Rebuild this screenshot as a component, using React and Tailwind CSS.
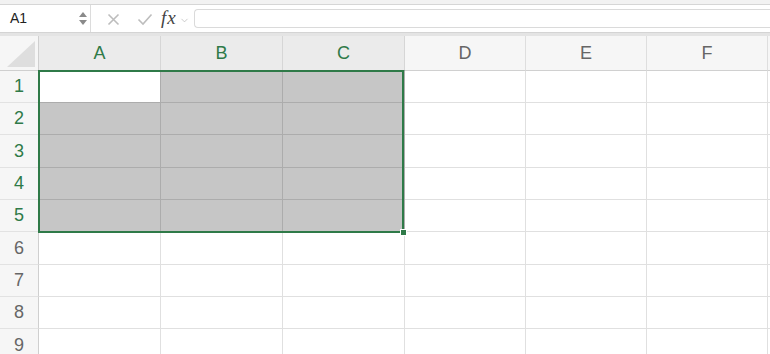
import { ChevronDown } from "lucide-react"

const cols = [
    { name: "A", w: "w-[122px]", sel: true },
    { name: "B", w: "w-[122px]", sel: true },
    { name: "C", w: "w-[122px]", sel: true },
    { name: "D", w: "w-[121px]", sel: false },
    { name: "E", w: "w-[121px]", sel: false },
    { name: "F", w: "w-[121px]", sel: false },
]

const rows = [
    { n: 1, h: "h-[32px]" },
    { n: 2, h: "h-[32px]" },
    { n: 3, h: "h-[33px]" },
    { n: 4, h: "h-[32px]" },
    { n: 5, h: "h-[32px]" },
    { n: 6, h: "h-[33px]" },
    { n: 7, h: "h-[32px]" },
    { n: 8, h: "h-[32px]" },
    { n: 9, h: "h-[33px]" },
]

function Toolbar() {
    return (
        <div className="flex h-[28px] border-b border-[#d4d4d4] bg-white">
            <div className="flex w-[91px] items-center justify-between border-r border-[#dcdcdc] pl-[10px] pr-[3px]">
                <span className="text-[14px] text-[#222]">A1</span>
                <div className="flex flex-col items-center gap-[3px]">
                    <svg width="8" height="5" viewBox="0 0 8 5"><path d="M4 0 L8 5 L0 5 Z" fill="#8a8a8a" /></svg>
                    <svg width="8" height="5" viewBox="0 0 8 5"><path d="M0 0 L8 0 L4 5 Z" fill="#8a8a8a" /></svg>
                </div>
            </div>
            <div className="flex w-[103px] items-center pl-[16px]">
                <svg width="13" height="13" viewBox="0 0 13 13" className="mt-[1px]">
                    <path d="M1.5 1.5 L11.5 11.5 M11.5 1.5 L1.5 11.5" stroke="#bdbdbd" strokeWidth="1.6" />
                </svg>
                <svg width="16" height="13" viewBox="0 0 16 13" className="ml-[17px] mt-[1px]">
                    <path d="M1.5 6.5 L6 11 L14.5 1.5" stroke="#bdbdbd" strokeWidth="1.6" fill="none" />
                </svg>
                <span className="ml-[8px] font-['Liberation_Serif'] text-[19px] italic tracking-[1px] text-[#444]">fx</span>
                <ChevronDown className="ml-[2px] mt-[3px] h-[11px] w-[11px] text-[#b5b5b5]" strokeWidth={1.5} />
            </div>
            <div className="my-[4px] flex-1 rounded-l-[4px] border border-r-0 border-[#dadada] bg-white" />
        </div>
    )
}

function HeaderRow() {
    return (
        <div className="flex h-[35px]">
            <div className="relative w-[39px] shrink-0 border-r border-b border-[#cfcfcf] bg-[#f6f6f6]">
                <svg width="28" height="26" viewBox="0 0 28 26" className="absolute right-[3px] bottom-[3px]">
                    <path d="M28 0 L28 26 L0 26 Z" fill="#dedede" />
                </svg>
            </div>
            {cols.map((c) => (
                <div
                    key={c.name}
                    className={`${c.w} shrink-0 flex items-center justify-center border-r border-b text-[18px] ${
                        c.sel
                            ? "bg-[#ebebeb] border-r-[#d6d6d6] border-b-[#2f7a48] text-[#2f7a48]"
                            : "bg-[#f6f6f6] border-r-[#dedede] border-b-[#d0d0d0] text-[#666]"
                    }`}
                >
                    {c.name}
                </div>
            ))}
            <div className="flex-1 border-b border-[#d0d0d0] bg-[#f6f6f6]" />
        </div>
    )
}

function Row({ n, h }) {
    const rowSel = n <= 5
    return (
        <div className={`flex ${h}`}>
            <div
                className={`w-[39px] shrink-0 flex items-center justify-center border-r border-b border-r-[#cfcfcf] border-b-[#e2e2e2] bg-[#f6f6f6] text-[18px] ${
                    rowSel ? "text-[#2f7a48]" : "text-[#666]"
                }`}
            >
                {n}
            </div>
            {cols.map((c, i) => {
                const inSel = rowSel && c.sel
                const white = !inSel || (n === 1 && i === 0)
                return (
                    <div
                        key={c.name}
                        className={`${c.w} shrink-0 border-r border-b ${
                            inSel ? "border-[#acacac]" : "border-[#e0e0e0]"
                        } ${white ? "bg-white" : "bg-[#c6c6c6]"}`}
                    />
                )
            })}
            <div className="flex-1 border-b border-[#e0e0e0] bg-white" />
        </div>
    )
}

export default function App() {
    return (
        <div className="relative h-[354px] w-[770px] overflow-hidden bg-white font-['Liberation_Sans',sans-serif]">
            <div className="h-[5px] border-b border-[#d6d6d6] bg-[#f2f2f2]" />
            <Toolbar />
            <div className="h-[3px] bg-[#e4e4e4]" />
            <HeaderRow />
            {rows.map((r) => (
                <Row key={r.n} n={r.n} h={r.h} />
            ))}
            <div className="pointer-events-none absolute left-[38px] top-[70px] h-[163px] w-[366px] border-2 border-[#2f7a48]" />
            <div className="absolute left-[400px] top-[229px] h-[7px] w-[7px] border border-white bg-[#2f7a48]" />
        </div>
    )
}
